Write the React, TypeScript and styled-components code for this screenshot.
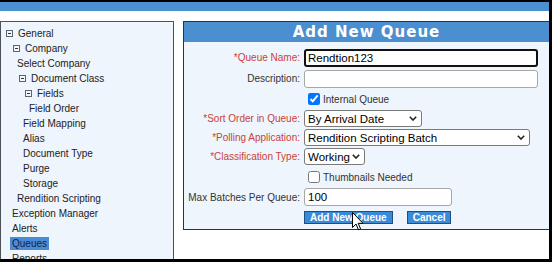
import React from "react";
import styled, { createGlobalStyle } from "styled-components";

const GlobalStyle = createGlobalStyle`
  html, body {
    margin: 0;
    padding: 0;
    background: #000;
  }
  body {
    font-family: "Liberation Sans", Arial, sans-serif;
  }
  * {
    box-sizing: border-box;
  }
`;

/* Screen frame */
const Frame = styled.div`
  width: 552px;
  height: 262px;
  background: #000;
  padding: 2px 3px 3px 0;
`;

const Screen = styled.div`
  height: 100%;
  background: #fff;
  display: flex;
  flex-direction: column;
  overflow: hidden;
`;

const TopBar = styled.div`
  flex: none;
  height: 9px;
  background: #4b90d1;
`;

const Body = styled.div`
  flex: 1;
  min-height: 0;
  display: flex;
  align-items: flex-start;
  padding-top: 10px;
`;

/* Left tree menu */
const Sidebar = styled.nav`
  flex: none;
  align-self: stretch;
  width: 174px;
  background: #eef5fc;
  border: 1px solid #4d5257;
  border-bottom: none;
  padding-top: 4px;
`;

const TreeItem = styled.div<{ $indent: number }>`
  display: flex;
  align-items: center;
  height: 15px;
  padding-left: ${(p) => p.$indent}px;
  font-size: 10px;
  color: #222;
  white-space: nowrap;
`;

const ItemText = styled.span<{ $selected?: boolean }>`
  display: inline-block;
  height: 13px;
  line-height: 13px;
  padding: 0 ${(p) => (p.$selected ? 2 : 0)}px;
  background: ${(p) => (p.$selected ? "#4a8bd3" : "transparent")};
  color: ${(p) => (p.$selected ? "#14234a" : "#222")};
`;

const ExpanderIcon = styled.svg`
  flex: none;
  width: 7px;
  height: 7px;
  margin-right: 5px;
`;

/* Main panel */
const Panel = styled.section`
  flex: 1;
  margin-left: 9px;
  margin-right: -1px;
  border: 1px solid #2f3336;
  background: #eef5fc;
`;

const PanelHeader = styled.h2`
  margin: 0;
  height: 20px;
  line-height: 20px;
  background: #4b8fd0;
  color: #fff;
  font-family: "DejaVu Sans", Verdana, sans-serif;
  font-weight: bold;
  font-size: 15px;
  letter-spacing: 1px;
  text-align: center;
`;

const Form = styled.form`
  display: flex;
  flex-direction: column;
  padding-top: 5px;
`;

const Row = styled.div<{ $h: number }>`
  display: grid;
  grid-template-columns: 116px 1fr;
  column-gap: 4px;
  align-items: center;
  justify-items: start;
  height: ${(p) => p.$h}px;
`;

const Label = styled.label<{ $required?: boolean }>`
  justify-self: end;
  text-align: right;
  font-size: 10px;
  white-space: nowrap;
  color: ${(p) => (p.$required ? "#c8423a" : "#333")};
`;

const TextInput = styled.input<{ $w: number; $focused?: boolean }>`
  width: ${(p) => p.$w}px;
  height: 18px;
  margin: 0;
  padding: 0 ${(p) => (p.$focused ? 2 : 3)}px;
  border: ${(p) => (p.$focused ? "2px solid #111" : "1px solid #a7a7a7")};
  border-radius: 3px;
  background: #fff;
  font-family: "Liberation Sans", Arial, sans-serif;
  font-size: 11.5px;
  color: #000;
  outline: none;
`;

const SelectBox = styled.span<{ $w: number }>`
  position: relative;
  display: inline-flex;
  width: ${(p) => p.$w}px;
  height: 17px;
`;

const Select = styled.select`
  appearance: none;
  width: 100%;
  height: 100%;
  margin: 0;
  padding: 0 14px 0 3px;
  border: 1px solid #7a7a7a;
  border-radius: 3px;
  background: #fff;
  font-family: "Liberation Sans", Arial, sans-serif;
  font-size: 11.5px;
  color: #000;
`;

const Chevron = styled.svg`
  position: absolute;
  right: 5px;
  top: 6px;
  width: 8px;
  height: 5px;
  pointer-events: none;
`;

const CheckField = styled.label`
  grid-column: 2;
  display: flex;
  align-items: center;
  padding-left: 4px;
  font-size: 10px;
  color: #333;
`;

const Checkbox = styled.input`
  width: 12px;
  height: 12px;
  margin: 0 3px 0 0;
`;

const Actions = styled.div`
  grid-column: 2;
  position: relative;
  display: flex;
  gap: 14px;
`;

const Button = styled.button`
  height: 13px;
  margin: 0;
  padding: 0 5px;
  border: 1px solid #1d4f86;
  background: #3b8ad8;
  color: #fff;
  font-family: "Liberation Sans", Arial, sans-serif;
  font-weight: bold;
  font-size: 10px;
  line-height: 11px;
`;

const Pointer = styled.svg`
  position: absolute;
  left: 48px;
  top: 1px;
  width: 12px;
  height: 19px;
`;

const tree = [
  { label: "General", x: 5, expand: true },
  { label: "Company", x: 12, expand: true },
  { label: "Select Company", x: 16 },
  { label: "Document Class", x: 18, expand: true },
  { label: "Fields", x: 24, expand: true },
  { label: "Field Order", x: 28 },
  { label: "Field Mapping", x: 22 },
  { label: "Alias", x: 22 },
  { label: "Document Type", x: 22 },
  { label: "Purge", x: 22 },
  { label: "Storage", x: 22 },
  { label: "Rendition Scripting", x: 16 },
  { label: "Exception Manager", x: 11 },
  { label: "Alerts", x: 11 },
  { label: "Queues", x: 9, selected: true },
  { label: "Reports", x: 11 },
];

const Expander = () => (
  <ExpanderIcon viewBox="0 0 7 7">
    <rect x="0.5" y="0.5" width="6" height="6" fill="#f4f7fa" stroke="#5a6570" />
    <line x1="2" y1="3.5" x2="5" y2="3.5" stroke="#333" />
  </ExpanderIcon>
);

const Dropdown = ({ width, value }: { width: number; value: string }) => (
  <SelectBox $w={width}>
    <Select defaultValue={value}>
      <option value={value}>{value}</option>
    </Select>
    <Chevron viewBox="0 0 8 5">
      <path d="M0.8 0.8 L4 4 L7.2 0.8" fill="none" stroke="#222" strokeWidth="1.6" />
    </Chevron>
  </SelectBox>
);

export default function App() {
  return (
    <>
      <GlobalStyle />
      <Frame>
        <Screen>
          <TopBar />
          <Body>
            <Sidebar>
              {tree.map((item) => (
                <TreeItem key={item.label} $indent={item.x}>
                  {item.expand && <Expander />}
                  <ItemText $selected={item.selected}>{item.label}</ItemText>
                </TreeItem>
              ))}
            </Sidebar>
            <Panel>
              <PanelHeader>Add New Queue</PanelHeader>
              <Form onSubmit={(e) => e.preventDefault()}>
                <Row $h={21}>
                  <Label $required>*Queue Name:</Label>
                  <TextInput $w={234} $focused defaultValue="Rendtion123" />
                </Row>
                <Row $h={21}>
                  <Label>Description:</Label>
                  <TextInput $w={234} defaultValue="" />
                </Row>
                <Row $h={20}>
                  <CheckField>
                    <Checkbox type="checkbox" defaultChecked />
                    Internal Queue
                  </CheckField>
                </Row>
                <Row $h={19}>
                  <Label $required>*Sort Order in Queue:</Label>
                  <Dropdown width={118} value="By Arrival Date" />
                </Row>
                <Row $h={19}>
                  <Label $required>*Polling Application:</Label>
                  <Dropdown width={226} value="Rendition Scripting Batch" />
                </Row>
                <Row $h={19}>
                  <Label $required>*Classification Type:</Label>
                  <Dropdown width={61} value="Working" />
                </Row>
                <Row $h={22}>
                  <CheckField>
                    <Checkbox type="checkbox" />
                    Thumbnails Needed
                  </CheckField>
                </Row>
                <Row $h={18}>
                  <Label>Max Batches Per Queue:</Label>
                  <TextInput $w={148} defaultValue="100" />
                </Row>
                <Row $h={23}>
                  <Actions>
                    <Button type="submit">Add New Queue</Button>
                    <Button type="button">Cancel</Button>
                    <Pointer viewBox="0 0 12 19">
                      <path
                        d="M0.5 0.5 L0.5 15.5 L4 12 L6.5 17.8 L8.6 16.9 L6.2 11.3 L11 11.3 Z"
                        fill="#fff"
                        stroke="#000"
                        strokeWidth="1"
                        strokeLinejoin="round"
                      />
                    </Pointer>
                  </Actions>
                </Row>
              </Form>
            </Panel>
          </Body>
        </Screen>
      </Frame>
    </>
  );
}
